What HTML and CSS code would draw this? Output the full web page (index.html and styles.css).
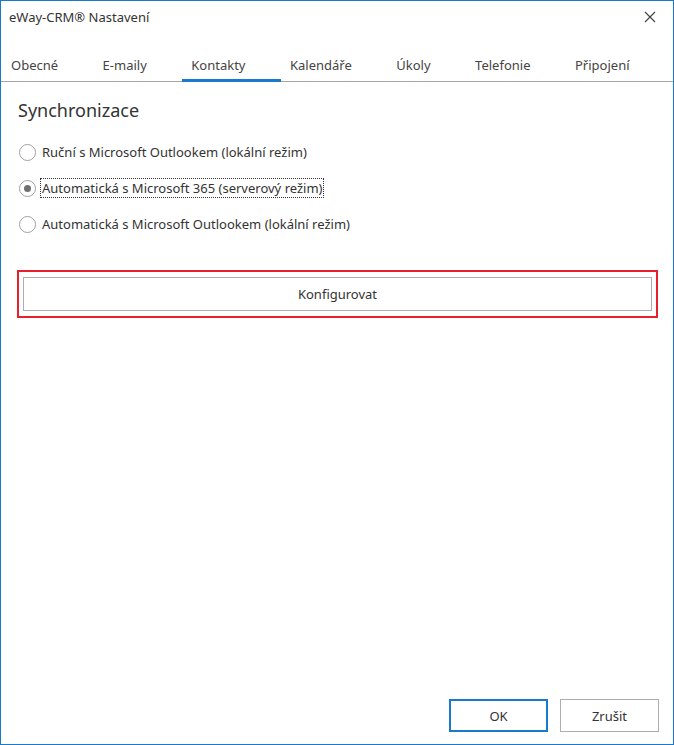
FILE: index.html
```html
<!DOCTYPE html>
<html lang="cs">
<head>
    <meta charset="UTF-8">
    <title>eWay-CRM Nastavení</title>
    <link rel="stylesheet" href="styles.css">
</head>
<body>
    <div class="okno">
        <div class="titulek">
            <span>eWay-CRM® Nastavení</span>
            <svg class="zavrit" width="12" height="12" viewBox="0 0 12 12">
                <path d="M1 1 L11 11 M11 1 L1 11" stroke="#444" stroke-width="1.2"/>
            </svg>
        </div>

        <div class="zalozky">
            <div class="zalozka">Obecné</div>
            <div class="zalozka">E-maily</div>
            <div class="zalozka aktivni">Kontakty</div>
            <div class="zalozka">Kalendáře</div>
            <div class="zalozka">Úkoly</div>
            <div class="zalozka">Telefonie</div>
            <div class="zalozka">Připojení</div>
        </div>

        <div class="obsah">
            <h1 class="nadpis">Synchronizace</h1>

            <div class="volba">
                <span class="kolecko"></span>
                <span class="popisek">Ruční s Microsoft Outlookem (lokální režim)</span>
            </div>
            <div class="volba">
                <span class="kolecko vybrano"></span>
                <span class="popisek fokus">Automatická s Microsoft 365 (serverový režim)</span>
            </div>
            <div class="volba">
                <span class="kolecko"></span>
                <span class="popisek">Automatická s Microsoft Outlookem (lokální režim)</span>
            </div>

            <div class="zvyrazneni">
                <button class="tlacitko siroke">Konfigurovat</button>
            </div>
        </div>

        <div class="paticka">
            <button class="tlacitko ok">OK</button>
            <button class="tlacitko">Zrušit</button>
        </div>
    </div>
</body>
</html>
```

FILE: styles.css
```css
* {
    box-sizing: border-box;
}

body {
    margin: 0;
    background-color: #ffffff;
    font-family: "Noto Sans", "Open Sans", sans-serif;
    color: #333333;
}

.okno {
    width: 674px;
    height: 745px;
    border: 1px solid #1979ca;
    display: flex;
    flex-direction: column;
    background-color: #ffffff;
}

.titulek {
    height: 31px;
    display: flex;
    align-items: center;
    justify-content: space-between;
    padding: 0 17px 0 8px;
    font-size: 13px;
    color: #333333;
}

.zavrit {
    display: block;
}

.zalozky {
    height: 50px;
    display: flex;
    align-items: flex-end;
    padding-left: 1px;
    border-bottom: 1px solid #a5a5a5;
}

.zalozka {
    height: 100%;
    flex-shrink: 0;
    white-space: nowrap;
    padding: 23px 35.5px 0 9px;
    font-size: 13px;
    color: #444444;
    border-bottom: 3px solid transparent;
    margin-bottom: -1px;
}

.zalozka.aktivni {
    border-bottom-color: #1979ca;
}

.obsah {
    flex: 1;
    padding: 0 16px 0 16px;
}

.nadpis {
    margin: 15px 0 11px 1px;
    font-size: 18px;
    font-weight: normal;
    color: #333333;
    line-height: 26px;
}

.volba {
    display: flex;
    align-items: center;
    height: 36px;
    font-size: 13px;
    color: #333333;
}

.kolecko {
    width: 17px;
    height: 17px;
    margin-left: 2px;
    margin-right: 4px;
    border: 1px solid #a0a0a0;
    border-radius: 50%;
    display: flex;
    align-items: center;
    justify-content: center;
}

.kolecko.vybrano::after {
    content: "";
    width: 7px;
    height: 7px;
    border-radius: 50%;
    background-color: #707070;
}

.popisek {
    padding: 0 1px;
    border: 1px dotted transparent;
}

.popisek.fokus {
    border-color: #333333;
}

.zvyrazneni {
    margin-top: 28px;
    width: 641px;
    height: 48px;
    border: 2px solid #e8202a;
    padding: 5px 4px;
}

.tlacitko {
    width: 99px;
    height: 33px;
    border: 1px solid #adadad;
    background-color: #ffffff;
    font-family: "Noto Sans", "Open Sans", sans-serif;
    font-size: 13px;
    color: #333333;
}

.tlacitko.siroke {
    width: 100%;
    height: 100%;
}

.tlacitko.ok {
    border: 2px solid #1979ca;
}

.paticka {
    display: flex;
    justify-content: flex-end;
    gap: 12px;
    padding: 0 14px 12px 0;
}
```
